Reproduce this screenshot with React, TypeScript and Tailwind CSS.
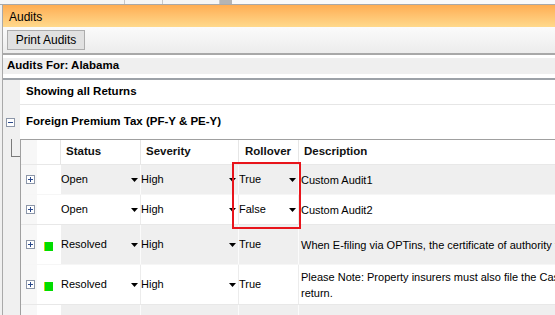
import React from 'react';

type Row = {
  h: string;
  shaded: boolean;
  plus: boolean;
  green: boolean;
  status: string;
  severity: string;
  rollover: string;
  rollDrop: boolean;
  desc: React.ReactNode;
};

const rows: Row[] = [
  { h: 'h-[30px]', shaded: true, plus: true, green: false, status: 'Open', severity: 'High', rollover: 'True', rollDrop: true, desc: 'Custom Audit1' },
  { h: 'h-[30px]', shaded: false, plus: true, green: false, status: 'Open', severity: 'High', rollover: 'False', rollDrop: true, desc: 'Custom Audit2' },
  { h: 'h-[40px]', shaded: true, plus: true, green: true, status: 'Resolved', severity: 'High', rollover: 'True', rollDrop: false, desc: 'When E-filing via OPTins, the certificate of authority fee must be paid separately.' },
  {
    h: 'h-[40px]', shaded: false, plus: true, green: true, status: 'Resolved', severity: 'High', rollover: 'True', rollDrop: false,
    desc: (
      <>
        <span className="block">Please Note: Property insurers must also file the Casualty return.</span>
        <span className="block">return.</span>
      </>
    ),
  },
  { h: 'h-[30px]', shaded: true, plus: false, green: false, status: '', severity: '', rollover: '', rollDrop: false, desc: '' },
];

const Drop = () => (
  <svg width="7" height="4" viewBox="0 0 7 4" className="shrink-0">
    <path d="M0 0 H7 L3.5 4 Z" fill="#000" />
  </svg>
);

const PlusBox = () => (
  <div className="w-[9px] h-[9px] border border-[#8c96a8] bg-white flex items-center justify-center">
    <svg width="7" height="7" viewBox="0 0 7 7">
      <path d="M1 3.5 H6 M3.5 1 V6" stroke="#2c4a8c" strokeWidth="1" />
    </svg>
  </div>
);

export default function App() {
  return (
    <div
      className="relative w-[555px] h-[315px] overflow-hidden bg-[#f0f0f0] text-[11px] text-black"
      style={{ fontFamily: '"Liberation Sans", Arial, sans-serif' }}
    >
      {/* top tab strip */}
      <div className="h-[5px] flex bg-[#f6f6f6] border-b border-[#a9a9a9]">
        <div className="w-[125px] border-r border-[#c8c8c8]" />
        <div className="w-[38px] border-r border-[#c8c8c8]" />
        <div className="w-[57px] border-r border-[#c8c8c8]" />
        <div className="w-[12px] bg-[#b4b4b4]" />
        <div className="flex-1 bg-[#fafafa]" />
      </div>

      <div className="ml-[2px] border-l border-[#a9a9a9] bg-white">
        {/* title */}
        <div className="h-[22px] flex items-center pl-[6px] pt-[1px] bg-gradient-to-b from-[#ffad52] to-[#ffd98c] text-[12px]">
          Audits
        </div>

        {/* toolbar */}
        <div className="h-[28px] flex items-center pl-[4px] bg-gradient-to-b from-[#fbfbfb] to-[#ececec] border-b-2 border-[#a8a8a8]">
          <button className="h-[20px] w-[78px] bg-[#e1e1e1] border border-[#adadad] text-[12px] text-black">
            Print Audits
          </button>
        </div>

        {/* audits for */}
        <div className="pt-[3px] pb-[4px] bg-white border-b-2 border-[#9da2a8]">
          <div className="h-[16px] flex items-center pl-[4px] bg-[#efefef] font-bold text-[11.5px]">
            Audits For: Alabama
          </div>
        </div>

        {/* body */}
        <div className="flex">
          <div className="w-[17px] bg-[#f0f0f0] flex flex-col">
            <div className="h-[25px]" />
            <div className="h-[34px] flex items-center justify-center relative">
              <div className="w-[9px] h-[9px] border border-[#8c96a8] bg-white flex items-center justify-center -translate-x-[1px]">
                <svg width="7" height="7" viewBox="0 0 7 7">
                  <path d="M1 3.5 H6" stroke="#2c4a8c" strokeWidth="1" />
                </svg>
              </div>
            </div>
            <div className="h-[25px] flex">
              <div className="w-[8px]" />
              <div className="w-[1px] h-[18px] bg-[#7a7a7a]" />
              <div className="self-start mt-[17px] w-[8px] h-[1px] bg-[#7a7a7a]" />
            </div>
          </div>

          <div className="flex-1 bg-white">
            <div className="h-[25px] flex items-center pl-[6px] font-bold text-[11.5px] border-b border-[#e6e6e6]">
              Showing all Returns
            </div>
            <div className="h-[34px] flex items-center pl-[6px] font-bold text-[11.5px]">
              Foreign Premium Tax (PF-Y &amp; PE-Y)
            </div>

            {/* grid */}
            <div className="border-t border-l border-[#a0a0a0] w-[600px]">
              <div className="h-[25px] flex font-bold text-[11.5px] text-[#111] border-b border-[#e8e8e8]">
                <div className="w-[16px] bg-[#f7f7f7]" />
                <div className="w-[24px] border-r border-[#e6e6e6]" />
                <div className="w-[80px] pl-[5px] flex items-center border-r border-[#e6e6e6]">Status</div>
                <div className="w-[98px] pl-[5px] flex items-center border-r border-[#e6e6e6]">Severity</div>
                <div className="w-[60px] pl-[6px] flex items-center border-r border-[#e6e6e6]">Rollover</div>
                <div className="flex-1 pl-[5px] flex items-center">Description</div>
              </div>

              {rows.map((r, i) => {
                const cell = r.shaded ? 'bg-[#efefef] border-r border-[#fbfbfb]' : 'bg-white border-r border-[#ececec]';
                return (
                  <div key={i} className={`${r.h} flex border-b ${r.shaded ? 'border-[#f6f6f6]' : 'border-[#e8e8e8]'}`}>
                    <div className="w-[16px] bg-[#f7f7f7] flex items-center justify-center pl-[2px]">
                      {r.plus && <PlusBox />}
                    </div>
                    <div className="w-[24px] bg-white flex items-center pl-[7px] pt-[4px]">
                      {r.green && <div className="w-[9px] h-[9px] bg-[#00dd00] border-l border-[#c8d800]" />}
                    </div>
                    <div className={`w-[80px] flex items-center justify-between pr-[2px] ${cell}`}>
                      <span>{r.status}</span>
                      {r.status && <Drop />}
                    </div>
                    <div className={`w-[98px] flex items-center justify-between pr-[2px] ${cell}`}>
                      <span>{r.severity}</span>
                      {r.severity && <Drop />}
                    </div>
                    <div className={`w-[60px] flex items-center justify-between pr-[2px] ${cell}`}>
                      <span>{r.rollover}</span>
                      {r.rollDrop && <Drop />}
                    </div>
                    <div className={`flex-1 flex flex-col justify-center pl-[2px] whitespace-nowrap overflow-hidden leading-[16px] ${r.shaded ? 'bg-[#efefef]' : 'bg-white'}`}>
                      {r.desc}
                    </div>
                  </div>
                );
              })}
            </div>
          </div>
        </div>
      </div>

      {/* highlight */}
      <div className="absolute left-[232px] top-[162px] w-[69px] h-[67px] border-2 border-[#e8141b]" />
    </div>
  );
}
